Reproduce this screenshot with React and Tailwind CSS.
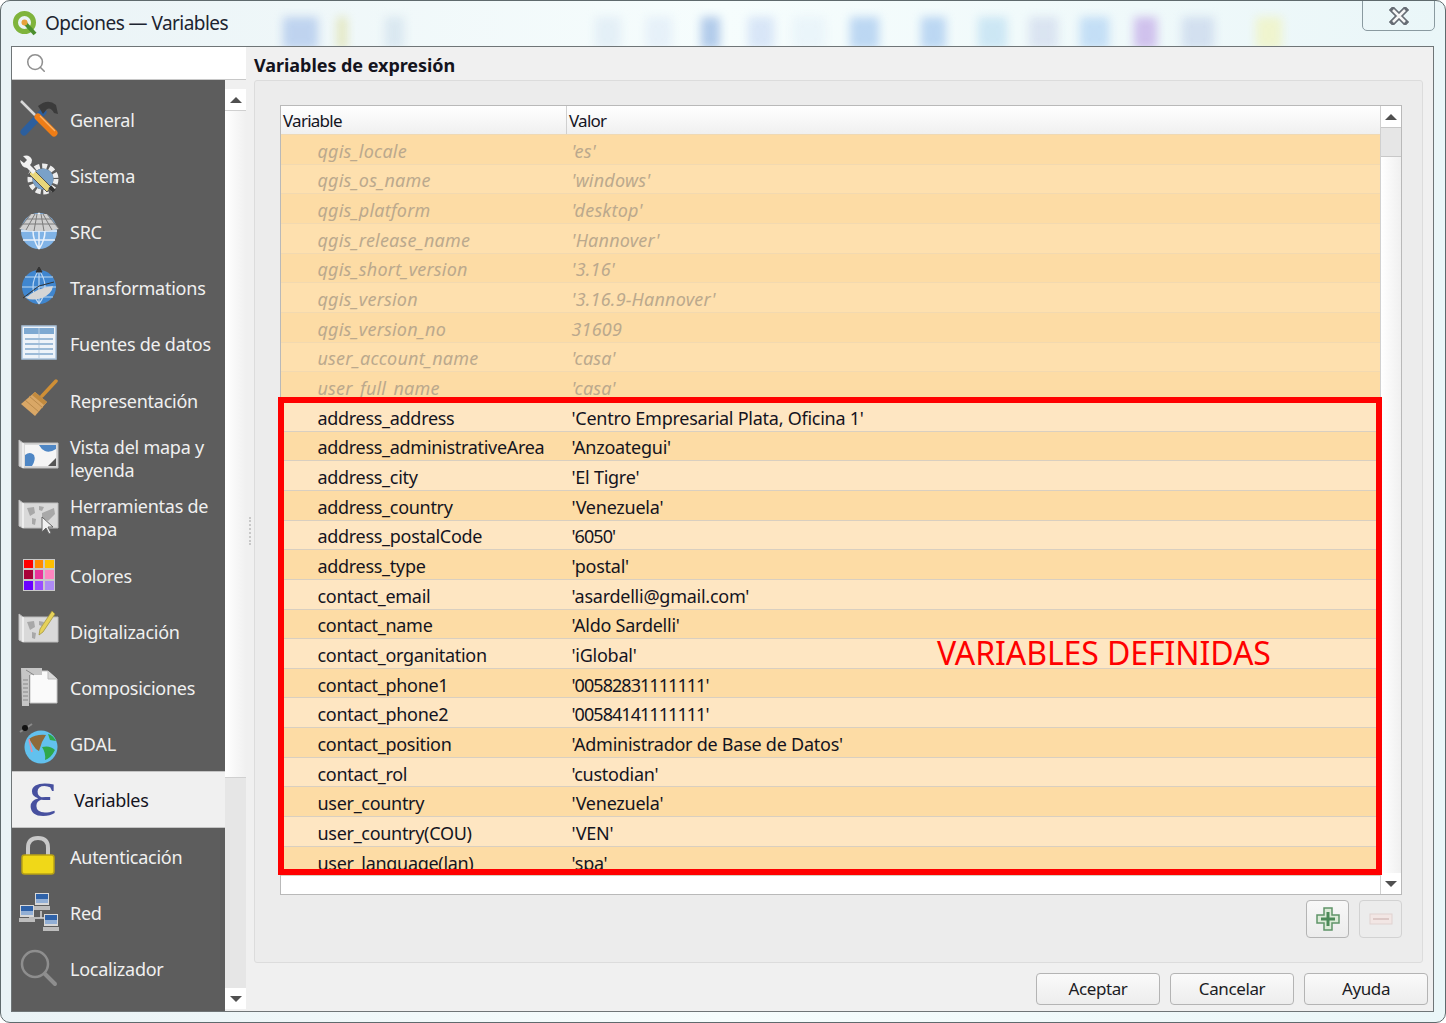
import { Search } from 'lucide-react';

const FONT = { fontFamily: '"Noto Sans", "Open Sans", sans-serif' };

const IconGeneral = () => (
  <svg width="42" height="42" viewBox="0 0 42 42">
    <path d="M3 3 L24 24" stroke="#d8d8d8" strokeWidth="2.5" />
    <path d="M25 14 L6 34" stroke="#2c5f9e" strokeWidth="7" strokeLinecap="round" />
    <path d="M20 8 Q30 0 38 7 L40 16 L36 15 Q33 9 29 11 L25 16 Z" fill="#3b3b3b" />
    <path d="M20 19 L36 35" stroke="#ef7d16" strokeWidth="7" strokeLinecap="round" />
    <path d="M22 18 L37 33" stroke="#fbb469" strokeWidth="1.2" />
  </svg>
);

const IconSistema = () => (
  <svg width="42" height="42" viewBox="0 0 42 42">
    <circle cx="25" cy="25" r="13" fill="none" stroke="#ededed" strokeWidth="5" strokeDasharray="5 2.5" />
    <circle cx="25" cy="25" r="10.5" fill="#7aa1c8" />
    <path d="M15 15 L33 33 L29 38 L11 20 Z" fill="#e8d67a" stroke="#555" strokeWidth="1" />
    <path d="M5 2 Q12 0 14 6 Q14 9 12 11 L18 17 L15 20 L9 14 Q3 13 2 6 L6 9 L9 6 Z" fill="#f2f2f2" />
    <rect x="31" y="33" width="6" height="4" fill="#333" transform="rotate(45 34 35)" />
  </svg>
);

const IconSrc = () => (
  <svg width="42" height="42" viewBox="0 0 42 42">
    <circle cx="21" cy="21" r="18" fill="#80b3e6" />
    <path d="M3 21 H39 M5 30 H37 M21 3 V39 M21 3 Q9 21 21 39 M21 3 Q33 21 21 39" stroke="#e8f1fb" strokeWidth="1.5" fill="none" />
    <path d="M1 19 L13 4 H29 L41 19 L30 21 H12 Z" fill="#cfcfcf" />
    <path d="M1 19 L13 4 M8 20 L17 4 M16 21 L19 4 M26 21 L23 4 M34 20 L25 4 M41 19 L29 4 M5 14 H37 M9 9 H33" stroke="#7c7c7c" strokeWidth="1" fill="none" />
  </svg>
);

const IconTransform = () => (
  <svg width="42" height="42" viewBox="0 0 42 42">
    <circle cx="21" cy="21" r="17" fill="#3f86cf" />
    <path d="M4 21 H38 M7 11 H35 M7 31 H35 M21 4 V38 M21 4 Q9 21 21 38 M21 4 Q33 21 21 38" stroke="#bcd7f2" strokeWidth="1.2" fill="none" />
    <path d="M8 32 Q18 22 35 20 Q34 28 24 32 Q14 35 8 32 Z" fill="#d5d5d5" />
    <path d="M21 1 L18 6 H24 Z M21 20 L5 32 M21 20 L36 16" stroke="#333" strokeWidth="1" fill="#333" />
  </svg>
);

const IconFuentes = () => (
  <svg width="42" height="42" viewBox="0 0 42 42">
    <rect x="4" y="4" width="34" height="33" fill="#eef3f9" stroke="#a9c2db" strokeWidth="1.5" />
    <rect x="6" y="6" width="30" height="6" fill="#7ea9d2" />
    <path d="M21 6 V36" stroke="#b8cde2" strokeWidth="1" />
    <path d="M7 17 H35 M7 22 H35 M7 27 H35 M7 32 H35" stroke="#9dbbd8" strokeWidth="2" />
  </svg>
);

const IconRender = () => (
  <svg width="42" height="42" viewBox="0 0 42 42">
    <path d="M38 2 L24 17" stroke="#cf8f36" strokeWidth="3.5" strokeLinecap="round" />
    <path d="M17 13 L29 23 L17 37 L3 25 Z" fill="#d9a766" />
    <path d="M7 21 L21 33 M11 17 L25 29" stroke="#b98a4c" strokeWidth="1" />
    <path d="M17 13 L29 23 L26 26 L14 16 Z" fill="#c18a3f" />
  </svg>
);

const MapBase = ({ children }) => (
  <svg width="42" height="42" viewBox="0 0 42 42">
    <path d="M1 4 L5 7 H40 V32 H5 L1 30 Z" fill="#d9d9d9" stroke="#bdbdbd" strokeWidth="1" />
    <path d="M5 7 V32" stroke="#f4f4f4" strokeWidth="1.5" />
    {children}
  </svg>
);

const IconVista = () => (
  <MapBase>
    <rect x="7" y="9" width="31" height="21" fill="#f5f5f5" />
    <path d="M7 19 Q12 15 16 19 Q18 24 14 30 H7 Z M21 9 H38 V13 Q32 17 27 15 Q23 13 21 9 Z" fill="#4f87c5" />
    <path d="M30 30 L38 22 V30 Z" fill="#555" />
  </MapBase>
);

const IconHerr = () => (
  <MapBase>
    <path d="M9 12 L16 11 L17 17 L12 20 Z M14 22 L18 23 L17 29 L14 28 Z M21 10 L26 11 L24 15 L21 14 Z M24 17 L36 12 L37 18 L30 25 L24 22 Z" fill="#a8a8a8" />
    <path d="M24 21 L24 36 L28 32 L31 38 L33 37 L30 31 L35 31 Z" fill="#f2f2f2" stroke="#666" strokeWidth="1" />
  </MapBase>
);

const COLORS = ['#ff0000', '#ff8a00', '#ffc000', '#a80038', '#e8339a', '#ff86c0', '#6a00ff', '#9a4dff', '#ae8af5'];

const IconColores = () => (
  <div className="w-[32px] h-[32px] ml-[5px] grid grid-cols-3 gap-[2px] p-[1px] bg-[#c9c9c9]">
    {COLORS.map((c) => (
      <div key={c} className="w-full h-full" style={{ backgroundColor: c }} />
    ))}
  </div>
);

const IconDigit = () => (
  <MapBase>
    <path d="M9 12 L16 11 L17 17 L12 20 Z M14 22 L18 23 L17 29 L14 28 Z M21 11 L26 12 L24 16 L21 15 Z" fill="#a8a8a8" />
    <path d="M34 1 L37 4 L25 22 L21 25 L22 19 Z" fill="#e6d25a" stroke="#9a8c3a" strokeWidth="0.7" />
  </MapBase>
);

const IconComp = () => (
  <svg width="42" height="42" viewBox="0 0 42 42">
    <path d="M12 5 H30 L39 13 V37 H12 Z" fill="#fafafa" stroke="#c8c8c8" strokeWidth="1" />
    <path d="M30 5 V13 H39" fill="#d8d8d8" stroke="#bbb" />
    <path d="M3 2 H24 V9 H11 V40 H4 Z" fill="#c6c6c6" />
    <path d="M5 14 H10 M5 18 H10 M5 22 H10 M5 26 H10 M5 30 H10 M5 34 H10" stroke="#888" strokeWidth="1" />
    <path d="M8 4 L16 9" stroke="#888" strokeWidth="1" />
  </svg>
);

const IconGdal = () => (
  <svg width="42" height="42" viewBox="0 0 42 42">
    <circle cx="23" cy="25" r="16.5" fill="#62c1ee" />
    <path d="M11 17 Q18 12 28 13 L24 20 L21 29 Q17 27 15 23 Z" fill="#8e6a3a" />
    <path d="M24 25 Q32 23 37 28 Q33 36 27 38 Q28 31 24 25 Z M30 12 Q35 13 38 19 L32 18 Z" fill="#2fa84a" />
    <path d="M11 17 L14 30" stroke="#e88a9c" strokeWidth="1.5" />
    <path d="M2 10 L14 2" stroke="#8a8a8a" strokeWidth="2" />
    <circle cx="7" cy="6" r="3" fill="#111" />
  </svg>
);

const IconLock = () => (
  <svg width="42" height="42" viewBox="0 0 42 42">
    <path d="M10 20 V13 Q10 3 20 3 Q30 3 30 13 V20" fill="none" stroke="#c9c9c9" strokeWidth="4" />
    <rect x="4" y="20" width="32" height="19" rx="2.5" fill="#f0d818" stroke="#b9a214" strokeWidth="1.5" />
  </svg>
);

const Pc = ({ x, y }) => (
  <g transform={`translate(${x} ${y})`}>
    <rect width="14" height="12" fill="#d8d8d8" />
    <rect x="1" y="1" width="12" height="9" fill="#2f62a8" />
    <rect x="1" y="6" width="12" height="4" fill="#bcd0e8" opacity="0.7" />
    <rect x="-1" y="13" width="16" height="4" fill="#bdbdbd" />
  </g>
);

const IconRed = () => (
  <svg width="42" height="42" viewBox="0 0 42 42">
    <path d="M23 20 V27 M11 27 H35" stroke="#d8d8d8" strokeWidth="1.5" />
    <Pc x="17" y="2" />
    <Pc x="2" y="14" />
    <Pc x="26" y="23" />
  </svg>
);

const IconLoc = () => (
  <svg width="42" height="42" viewBox="0 0 42 42">
    <circle cx="17" cy="17" r="13" fill="none" stroke="#8e8e8e" strokeWidth="2.5" />
    <path d="M27 27 L37 37" stroke="#8e8e8e" strokeWidth="4" strokeLinecap="round" />
  </svg>
);

const NAV_ITEMS = [
  { label: 'General', Icon: IconGeneral },
  { label: 'Sistema', Icon: IconSistema },
  { label: 'SRC', Icon: IconSrc },
  { label: 'Transformations', Icon: IconTransform },
  { label: 'Fuentes de datos', Icon: IconFuentes },
  { label: 'Representación', Icon: IconRender },
  { label: 'Vista del mapa y leyenda', Icon: IconVista, tall: true },
  { label: 'Herramientas de mapa', Icon: IconHerr, tall: true },
  { label: 'Colores', Icon: IconColores },
  { label: 'Digitalización', Icon: IconDigit },
  { label: 'Composiciones', Icon: IconComp },
  { label: 'GDAL', Icon: IconGdal },
  { label: 'Variables', selected: true },
  { label: 'Autenticación', Icon: IconLock },
  { label: 'Red', Icon: IconRed },
  { label: 'Localizador', Icon: IconLoc },
];

const READ_ONLY = [
  ['qgis_locale', "'es'"],
  ['qgis_os_name', "'windows'"],
  ['qgis_platform', "'desktop'"],
  ['qgis_release_name', "'Hannover'"],
  ['qgis_short_version', "'3.16'"],
  ['qgis_version', "'3.16.9-Hannover'"],
  ['qgis_version_no', '31609'],
  ['user_account_name', "'casa'"],
  ['user_full_name', "'casa'"],
];

const CUSTOM = [
  ['address_address', "'Centro Empresarial Plata, Oficina 1'"],
  ['address_administrativeArea', "'Anzoategui'"],
  ['address_city', "'El Tigre'"],
  ['address_country', "'Venezuela'"],
  ['address_postalCode', "'6050'"],
  ['address_type', "'postal'"],
  ['contact_email', "'asardelli@gmail.com'"],
  ['contact_name', "'Aldo Sardelli'"],
  ['contact_organitation', "'iGlobal'"],
  ['contact_phone1', "'00582831111111'"],
  ['contact_phone2', "'00584141111111'"],
  ['contact_position', "'Administrador de Base de Datos'"],
  ['contact_rol', "'custodian'"],
  ['user_country', "'Venezuela'"],
  ['user_country(COU)', "'VEN'"],
  ['user_language(lan)', "'spa'"],
];

// faded desktop icons showing through the glass title bar
const GLASS_BLOBS = [
  'left-[282px] w-[35px] bg-[#8fb0e6]',
  'left-[336px] w-[10px] bg-[#d8d88a]',
  'left-[384px] w-[19px] bg-[#c4d8e8]',
  'left-[594px] w-[26px] bg-[#d4e4f2]',
  'left-[645px] w-[26px] bg-[#d8e6f6]',
  'left-[700px] w-[19px] bg-[#6f9ad8]',
  'left-[747px] w-[26px] bg-[#bcd0f2]',
  'left-[792px] w-[32px] bg-[#e0eef8]',
  'left-[849px] w-[29px] bg-[#86b4ea]',
  'left-[920px] w-[25px] bg-[#86b4ea]',
  'left-[977px] w-[29px] bg-[#a8d4ee]',
  'left-[1028px] w-[29px] bg-[#c4cfe8]',
  'left-[1079px] w-[29px] bg-[#98c4f2]',
  'left-[1133px] w-[23px] bg-[#b08ae0]',
  'left-[1181px] w-[32px] bg-[#b8c8e6]',
  'left-[1255px] w-[26px] bg-[#f2f2a4]',
];

function NavItem({ item }) {
  const { label, Icon, selected, tall } = item;
  if (selected) {
    return (
      <div className="h-[56.2px] shrink-0 flex items-center bg-[#f0f0f0] border-y border-[#c4c4c4] text-[#14141e]">
        <span className="w-[62px] pl-[16px] pb-[14px] text-[#47509f] text-[68px] leading-[40px]" style={{ fontFamily: '"Liberation Serif", serif' }}>ε</span>
        <span className="pt-[3px] text-[18px] tracking-[-0.3px]">{label}</span>
      </div>
    );
  }
  return (
    <div className={`shrink-0 flex items-center text-[#f0f0f0] ${tall ? 'h-[59.5px]' : 'h-[56.2px]'}`}>
      <div className="w-[58px] pl-[6px] shrink-0">
        <Icon />
      </div>
      <span className="pt-[3px] text-[18px] leading-[23px] tracking-[-0.25px] w-[150px]">{label}</span>
    </div>
  );
}

function ScrollArrow({ up }) {
  return (
    <div className="h-[21px] shrink-0 flex items-center justify-center bg-white">
      <div className={`w-0 h-0 border-x-[6px] border-x-transparent ${up ? 'border-b-[6px] border-b-[#505050]' : 'border-t-[6px] border-t-[#505050]'}`} />
    </div>
  );
}

function Row({ name, value, index, muted }) {
  let tone = index % 2 === 0 ? 'bg-[#fddca5]' : 'bg-[#fee6c2]';
  if (muted) tone = index % 2 === 0 ? 'bg-[#fddca5]' : 'bg-[#fee0ae]';
  const nameTrack = muted ? 'tracking-[0.2px]' : 'tracking-[-0.3px]';
  let valueTrack = muted ? 'tracking-[0.2px]' : 'tracking-[-0.25px]';
  if (!muted && /\d{4}/.test(value)) valueTrack = 'tracking-[-0.95px]';
  return (
    <div className={`h-[29.67px] shrink-0 flex items-center pt-[4px] border-b ${muted ? 'border-[#f2d9b0] italic text-[#bba98d]' : 'border-[#d9cfc0] text-[#14141e]'} ${tone}`}>
      <span className={`w-[290.5px] pl-[36.5px] shrink-0 ${nameTrack}`}>{name}</span>
      <span className={valueTrack}>{value}</span>
    </div>
  );
}

function DialogButton({ children }) {
  return (
    <button className="w-[124px] h-[32px] rounded-[4px] border border-[#b4b4b4] bg-gradient-to-b from-[#fafafa] to-[#ededed] text-[17px] tracking-[-0.4px] text-[#1c1c24]">
      {children}
    </button>
  );
}

export default function App() {
  return (
    <div className="relative w-[1446px] h-[1023px] overflow-hidden bg-white" style={FONT}>
      <div className="w-full h-full rounded-[10px] border border-[#5f6a6d] bg-gradient-to-r from-[#eaf3f6] via-[#f6fdfd] to-[#eaf6f8] flex flex-col overflow-hidden">
        {/* Title bar */}
        <div className="relative h-[45px] shrink-0 flex items-start pl-[11px] pt-[9px] gap-[7px] overflow-hidden">
          {GLASS_BLOBS.map((cls) => (
            <div key={cls} className={`absolute top-[16px] h-[32px] opacity-50 blur-[5px] ${cls}`} />
          ))}
          <svg width="26" height="26" viewBox="0 0 26 26" className="relative shrink-0">
            <circle cx="12.5" cy="12.5" r="9" fill="none" stroke="#7fb43c" strokeWidth="5" />
            <path d="M13 13 L23 24" stroke="#4c8f2e" strokeWidth="4" />
            <circle cx="12.5" cy="12.5" r="3" fill="#e8a23c" />
          </svg>
          <span className="relative text-[19px] leading-[26px] tracking-[-0.55px] text-[#1c2430]">Opciones — Variables</span>
          <div className="absolute right-[10px] top-[-1px] w-[73px] h-[31px] rounded-b-[5px] border border-[#8a9aa0] flex items-center justify-center">
            <svg width="20" height="18" viewBox="0 0 20 18">
              <path d="M4 3 L16 15 M16 3 L4 15" stroke="#666c74" strokeWidth="6" strokeLinecap="square" />
              <path d="M4 3 L16 15 M16 3 L4 15" stroke="#f6f6f6" strokeWidth="2.5" />
            </svg>
          </div>
        </div>

        {/* Dialog */}
        <div className="ml-[10px] mr-[11px] h-[966px] shrink-0 flex bg-[#f0f0f0] border border-[#6f7577]">
          {/* Sidebar */}
          <div className="w-[234px] shrink-0 flex flex-col">
            <div className="h-[33px] shrink-0 bg-white border-b border-[#c8c8c8] flex items-center pl-[13px]">
              <Search size={22} strokeWidth={1.7} className="text-[#8f8f8f]" />
            </div>
            <div className="flex-1 flex min-h-0">
              <div className="w-[213px] shrink-0 bg-[#5d5d5d] pt-[10.5px] flex flex-col overflow-hidden">
                {NAV_ITEMS.map((item) => (
                  <NavItem key={item.label} item={item} />
                ))}
              </div>
              <div className="flex-1 pt-[9px] pb-[2px] flex flex-col">
                <ScrollArrow up />
                <div className="h-[668px] shrink-0 bg-gradient-to-r from-white to-[#f0f0f0] border-y border-[#d0d0d0]" />
                <div className="flex-1 bg-[#e6e6e6]" />
                <ScrollArrow />
              </div>
            </div>
          </div>

          {/* Right panel */}
          <div className="relative flex-1 min-w-0 flex flex-col pl-[8px] pr-[10px]">
            <div className="absolute left-[3px] top-[470px] h-[28px] w-[2px] border-l-2 border-dotted border-[#c8c8c8]" />
            <div className="h-[33px] shrink-0 flex items-center pt-[4px] font-bold text-[18px] tracking-[-0.05px] text-[#14141e]">
              Variables de expresión
            </div>
            <div className="h-[883px] shrink-0 rounded-[3px] border border-[#dcdcdc] bg-[#ececec] pl-[25px] pr-[20px] pt-[24px]">
              <div className="h-[790px] flex border border-[#b9b9b9] bg-white text-[18px]">
                <div className="flex-1 min-w-0 flex flex-col overflow-hidden">
                  <div className="h-[29px] shrink-0 flex items-center bg-gradient-to-b from-white to-[#f0f0f0] border-b border-[#efd9b4] text-[17px] tracking-[-0.75px] text-[#14141e]">
                    <span className="w-[286px] pl-[2px] pt-[2px] h-full flex items-center border-r border-[#d0d0d0]">Variable</span>
                    <span className="pl-[2px] pt-[2px]">Valor</span>
                  </div>
                  <div className="h-[741px] shrink-0 overflow-hidden flex flex-col">
                    {READ_ONLY.map(([name, value], i) => (
                      <Row key={name} name={name} value={value} index={i} muted />
                    ))}
                    {CUSTOM.map(([name, value], i) => (
                      <Row key={name} name={name} value={value} index={i + 9} />
                    ))}
                  </div>
                </div>
                <div className="w-[21px] shrink-0 flex flex-col border-l border-[#d0d0d0]">
                  <ScrollArrow up />
                  <div className="h-[30px] shrink-0 bg-[#e6e6e6] border-y border-[#c8c8c8]" />
                  <div className="flex-1 bg-gradient-to-r from-white to-[#f0f0f0]" />
                  <ScrollArrow />
                </div>
              </div>
              <div className="flex justify-end gap-[10px] mt-[5px]">
                <div className="w-[43px] h-[38px] rounded-[4px] border border-[#b4b4b4] bg-gradient-to-b from-[#f8f8f8] to-[#ececec] flex items-center justify-center">
                  <svg width="24" height="24" viewBox="0 0 24 24">
                    <path d="M8 1 H16 V8 H23 V16 H16 V23 H8 V16 H1 V8 H8 Z" fill="#dcebd8" stroke="#5f9468" strokeWidth="1.5" />
                    <path d="M12 5 V19 M5 12 H19" stroke="#4c8a58" strokeWidth="3" />
                  </svg>
                </div>
                <div className="w-[43px] h-[38px] rounded-[4px] border border-[#d2d2d2] bg-[#ececec] flex items-center justify-center">
                  <svg width="24" height="12" viewBox="0 0 24 12">
                    <rect x="1" y="1" width="22" height="10" fill="#f2e6e4" stroke="#e0d2d0" strokeWidth="1" />
                    <path d="M4 6 H20" stroke="#dcc8c6" strokeWidth="2" />
                  </svg>
                </div>
              </div>
            </div>
            <div className="flex justify-end gap-[10px] mt-[10px] mr-[-5px]">
              <DialogButton>Aceptar</DialogButton>
              <DialogButton>Cancelar</DialogButton>
              <DialogButton>Ayuda</DialogButton>
            </div>
          </div>
        </div>
      </div>

      {/* Annotation drawn over the table */}
      <div className="absolute left-[278px] top-[397px] w-[1104px] h-[478px] border-[6px] border-[#ff0000] pointer-events-none" />
      <span className="absolute left-[937px] top-[631px] text-[32px] leading-[44px] text-[#ff0000] tracking-[-0.08px]">VARIABLES DEFINIDAS</span>
    </div>
  );
}
